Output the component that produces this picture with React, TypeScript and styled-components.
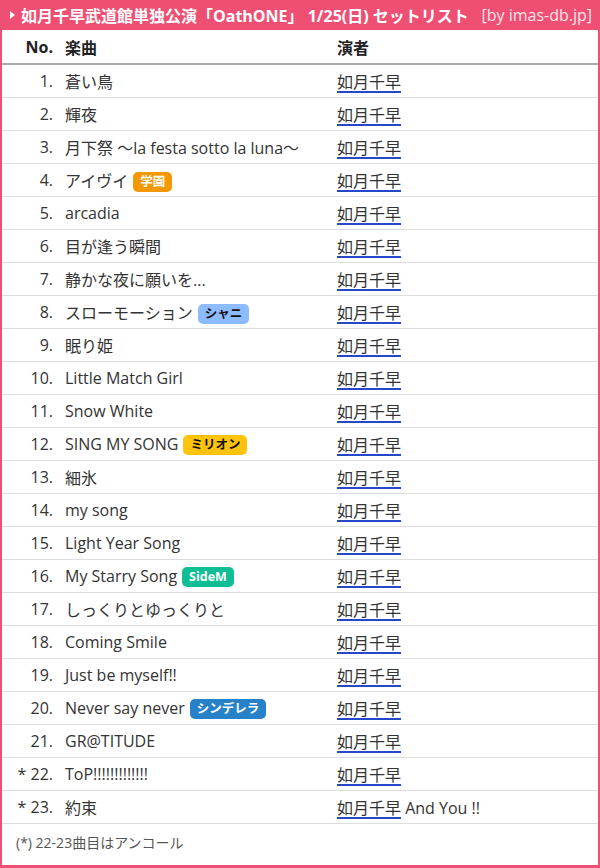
import styled, { createGlobalStyle } from "styled-components";

const PINK = "#ef4f72";

const GlobalStyle = createGlobalStyle`
  html, body {
    margin: 0;
    padding: 0;
    background: #fff;
  }
  body {
    font-family: "Open Sans", "Noto Sans CJK JP", sans-serif;
    color: #333;
  }
`;

type Unit = "gakuen" | "shiny" | "million" | "sidem" | "cinderella";

const UNIT_STYLE: Record<Unit, { bg: string; fg: string; label: string }> = {
  gakuen: { bg: "#f39800", fg: "#fff", label: "学園" },
  shiny: { bg: "#8dbbff", fg: "#111", label: "シャニ" },
  million: { bg: "#ffc30b", fg: "#111", label: "ミリオン" },
  sidem: { bg: "#0fbe94", fg: "#fff", label: "SideM" },
  cinderella: { bg: "#2681c8", fg: "#fff", label: "シンデレラ" },
};

type Song = {
  no: number;
  title: string;
  unit?: Unit;
  encore?: boolean;
  extra?: string;
};

const SONGS: Song[] = [
  { no: 1, title: "蒼い鳥" },
  { no: 2, title: "輝夜" },
  { no: 3, title: "月下祭 〜la festa sotto la luna〜" },
  { no: 4, title: "アイヴイ", unit: "gakuen" },
  { no: 5, title: "arcadia" },
  { no: 6, title: "目が逢う瞬間" },
  { no: 7, title: "静かな夜に願いを..." },
  { no: 8, title: "スローモーション", unit: "shiny" },
  { no: 9, title: "眠り姫" },
  { no: 10, title: "Little Match Girl" },
  { no: 11, title: "Snow White" },
  { no: 12, title: "SING MY SONG", unit: "million" },
  { no: 13, title: "細氷" },
  { no: 14, title: "my song" },
  { no: 15, title: "Light Year Song" },
  { no: 16, title: "My Starry Song", unit: "sidem" },
  { no: 17, title: "しっくりとゆっくりと" },
  { no: 18, title: "Coming Smile" },
  { no: 19, title: "Just be myself!!" },
  { no: 20, title: "Never say never", unit: "cinderella" },
  { no: 21, title: "GR@TITUDE" },
  { no: 22, title: "ToP!!!!!!!!!!!!!", encore: true },
  { no: 23, title: "約束", encore: true, extra: " And You !!" },
];

const Panel = styled.div`
  box-sizing: border-box;
  width: 600px;
  height: 868px;
  border: 2px solid ${PINK};
  border-top: none;
  border-bottom-width: 3px;
  display: flex;
  flex-direction: column;
`;

const Header = styled.div`
  height: 30px;
  margin: 0 -2px;
  padding: 0 8px 0 10px;
  background: ${PINK};
  color: #fff;
  display: flex;
  align-items: center;
  gap: 6px;
  font-size: 16px;
  flex-shrink: 0;
`;

const Arrow = styled.span`
  width: 0;
  height: 0;
  border-left: 5px solid #fff;
  border-top: 4px solid transparent;
  border-bottom: 4px solid transparent;
`;

const Title = styled.span`
  font-weight: 700;
  white-space: nowrap;
  flex-grow: 1;
`;

const Credit = styled.span`
  font-weight: 400;
  color: #fde3e9;
  white-space: nowrap;
`;

const Table = styled.table`
  width: 100%;
  border-collapse: collapse;
  margin-top: 1px;
  font-size: 16px;
`;

const HeadCell = styled.th<{ $num?: boolean }>`
  height: 32px;
  padding: 0 ${(p) => (p.$num ? "12px" : "0")} 0 0;
  text-align: ${(p) => (p.$num ? "right" : "left")};
  font-weight: 700;
  color: #222;
  border-bottom: 2px solid #aaa;
`;

const Cell = styled.td<{ $num?: boolean }>`
  height: 32px;
  padding: 0 ${(p) => (p.$num ? "12px" : "0")} 0 0;
  text-align: ${(p) => (p.$num ? "right" : "left")};
  white-space: nowrap;
  border-bottom: 1px solid #ddd;
  vertical-align: middle;
`;

const Badge = styled.span<{ $bg: string; $fg: string }>`
  display: inline-block;
  margin-left: 5px;
  padding: 0 7px;
  height: 20px;
  line-height: 20px;
  border-radius: 5px;
  font-size: 12.5px;
  font-weight: 700;
  vertical-align: 1px;
  background: ${(p) => p.$bg};
  color: ${(p) => p.$fg};
`;

const Performer = styled.a`
  color: #333;
  text-decoration: underline;
  text-decoration-color: #2548c8;
  text-decoration-thickness: 2px;
  text-decoration-skip-ink: none;
  text-underline-offset: 3px;
  cursor: pointer;
`;

const Footer = styled.div`
  padding: 8px 14px;
  font-size: 14px;
  color: #555;
`;

export default function App() {
  return (
    <>
      <GlobalStyle />
      <Panel>
        <Header>
          <Arrow />
          <Title>如月千早武道館単独公演「OathONE」 1/25(日) セットリスト</Title>
          <Credit>[by imas-db.jp]</Credit>
        </Header>
        <Table>
          <colgroup>
            <col style={{ width: 63 }} />
            <col style={{ width: 272 }} />
            <col />
          </colgroup>
          <thead>
            <tr>
              <HeadCell $num>No.</HeadCell>
              <HeadCell>楽曲</HeadCell>
              <HeadCell>演者</HeadCell>
            </tr>
          </thead>
          <tbody>
            {SONGS.map((s) => {
              const unit = s.unit ? UNIT_STYLE[s.unit] : null;
              return (
                <tr key={s.no}>
                  <Cell $num>
                    {s.encore ? "* " : ""}
                    {s.no}.
                  </Cell>
                  <Cell>
                    {s.title}
                    {unit && (
                      <Badge $bg={unit.bg} $fg={unit.fg}>
                        {unit.label}
                      </Badge>
                    )}
                  </Cell>
                  <Cell>
                    <Performer>如月千早</Performer>
                    {s.extra}
                  </Cell>
                </tr>
              );
            })}
          </tbody>
        </Table>
        <Footer>(*) 22-23曲目はアンコール</Footer>
      </Panel>
    </>
  );
}
